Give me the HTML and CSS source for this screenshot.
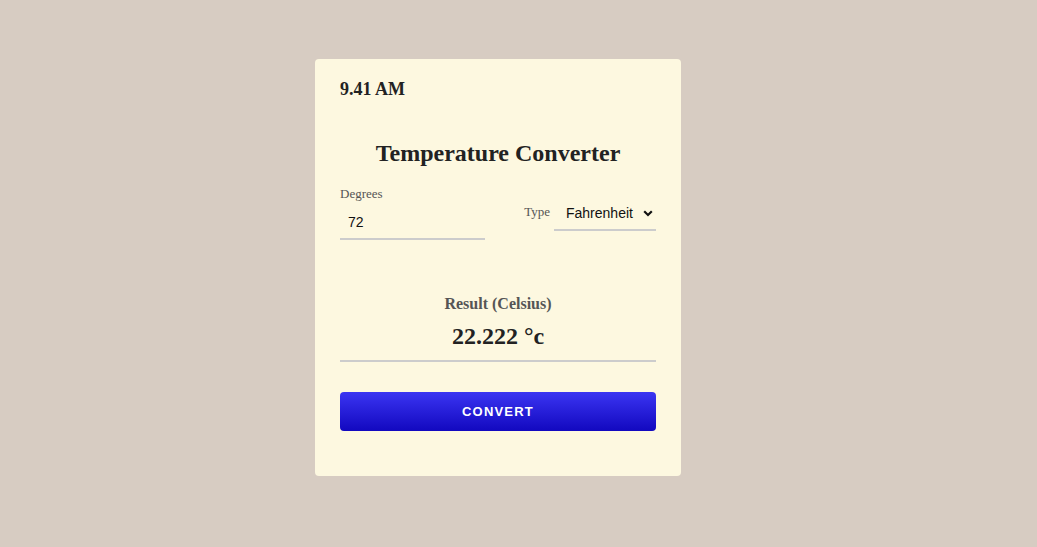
FILE: index.html
```html
<!DOCTYPE html>
<html>
<head>
<meta charset="utf-8">
<link rel="stylesheet" href="styles.css">
</head>
<body>
<div class="page">
  <div class="card">
    <div class="time">9.41 AM</div>
    <h1 class="title">Temperature Converter</h1>
    <div class="row">
      <div class="field">
        <label class="label">Degrees</label>
        <input class="input" type="text" value="72">
      </div>
      <div class="type">
        <span class="label type-label">Type</span>
        <div class="select-wrap">
          <span class="select-text">Fahrenheit</span>
          <svg class="chev" width="10" height="7" viewBox="0 0 10 7"><path d="M1.2 1.3 L5 5 L8.8 1.3" fill="none" stroke="#111" stroke-width="2.2"/></svg>
        </div>
      </div>
    </div>
    <div class="result">
      <div class="result-label">Result (Celsius)</div>
      <div class="result-value">22.222 °c</div>
    </div>
    <button class="btn">CONVERT</button>
  </div>
</div>
</body>
</html>
```
FILE: styles.css
```css
html, body { margin: 0; padding: 0; }
body {
  background: #d7ccc2;
  font-family: "Liberation Serif", "Times New Roman", serif;
  width: 1037px;
  height: 547px;
}
.page {
  display: flex;
  justify-content: center;
  padding-top: 59px;
  padding-right: 41px;
}
.card {
  width: 316px;
  height: 367px;
  padding: 25px;
  background: #fdf8e0;
  border-radius: 4px;
  display: flex;
  flex-direction: column;
}
.time {
  font-weight: bold;
  font-size: 18px;
  color: #222;
  line-height: 10px;
}
.title {
  margin: 45px 0 0;
  font-size: 24px;
  line-height: 28px;
  text-align: center;
  color: #222;
}
.row {
  display: flex;
  justify-content: space-between;
  align-items: flex-start;
  margin-top: 20px;
}
.field { display: flex; flex-direction: column; width: 145px; }
.label { font-size: 13px; color: #555; line-height: 14px; }
.input {
  border: none;
  border-bottom: 2px solid #ccc;
  background: transparent;
  font-family: "Liberation Sans", Arial, sans-serif;
  font-size: 14px;
  color: #111;
  padding: 6px 8px 8px;
  margin-top: 7px;
  outline: none;
  width: 145px;
  box-sizing: border-box;
}
.type {
  display: flex;
  align-items: flex-start;
  margin-top: 14px;
}
.type-label { margin-right: 4px; margin-top: 4px; }
.select-wrap {
  width: 102px;
  box-sizing: border-box;
  border-bottom: 2px solid #ccc;
  display: flex;
  align-items: center;
  justify-content: space-between;
  padding: 4px 3px 8px 12px;
  font-family: "Liberation Sans", Arial, sans-serif;
  font-size: 14px;
  color: #111;
  line-height: 16px;
}
.result {
  margin-top: 55px;
  text-align: center;
  border-bottom: 2px solid #ccc;
  padding-bottom: 10px;
}
.result-label {
  font-weight: bold;
  font-size: 16px;
  color: #555;
  line-height: 18px;
}
.result-value {
  font-weight: bold;
  font-size: 24px;
  color: #222;
  line-height: 28px;
  margin-top: 9px;
}
.btn {
  margin-top: 30px;
  height: 39px;
  border: none;
  border-radius: 4px;
  background: linear-gradient(#3b35f2, #1208bf);
  color: #fff;
  font-family: "Liberation Sans", Arial, sans-serif;
  font-weight: bold;
  font-size: 13px;
  letter-spacing: 1.2px;
}
```
